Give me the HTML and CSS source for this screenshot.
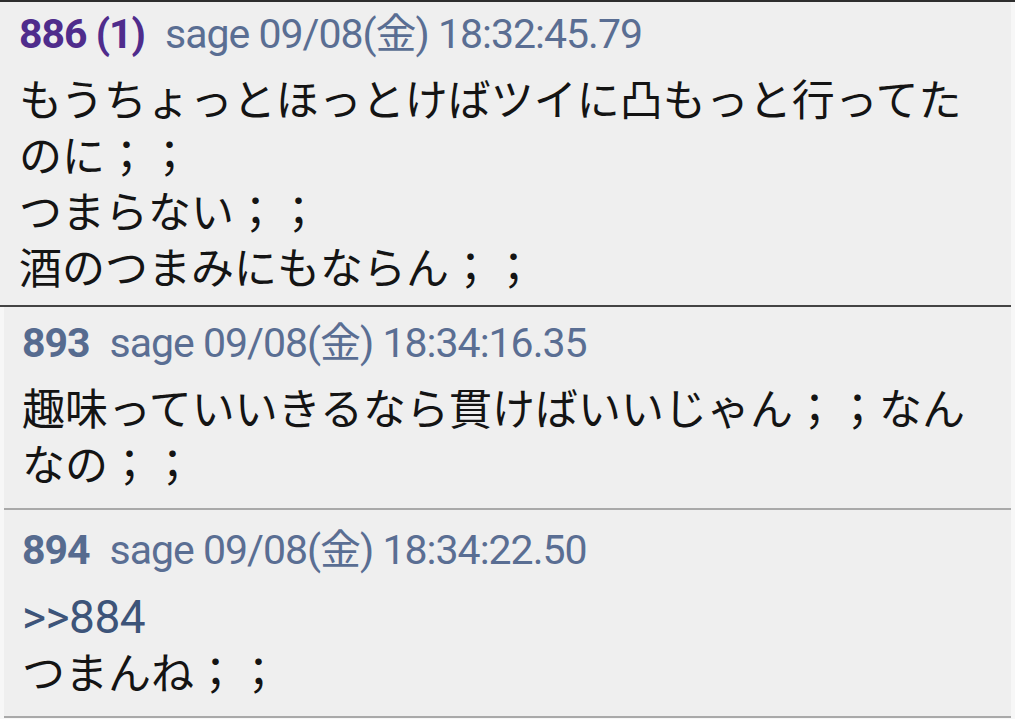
FILE: index.html
```html
<!DOCTYPE html>
<html lang="ja">
<head>
<meta charset="utf-8">
<title>thread</title>
<link rel="stylesheet" href="styles.css">
</head>
<body>
<div class="thread">
  <div class="post post-first">
    <div class="head"><span class="num num-mine">886 (1)</span><span class="meta">sage 09/08(金) 18:32:45.79</span></div>
    <div class="body">もうちょっとほっとけばツイに凸もっと行ってたのに；；<br>つまらない；；<br>酒のつまみにもならん；；</div>
  </div>
  <div class="post post-mid">
    <div class="head"><span class="num">893</span><span class="meta">sage 09/08(金) 18:34:16.35</span></div>
    <div class="body">趣味っていいきるなら貫けばいいじゃん；；なんなの；；</div>
  </div>
  <div class="post post-last">
    <div class="head"><span class="num">894</span><span class="meta">sage 09/08(金) 18:34:22.50</span></div>
    <div class="body"><span class="anchor">&gt;&gt;884</span><br>つまんね；；</div>
  </div>
</div>
</body>
</html>
```

FILE: styles.css
```css
html, body {
  margin: 0;
  padding: 0;
}
body {
  width: 1015px;
  height: 719px;
  overflow: hidden;
  background: #f7f7f7;
}
.thread {
  border-top: 2px solid #2e2e2e;
  display: flex;
  flex-direction: column;
}
.post {
  background: #efefef;
  margin: 0 4px;
  padding: 14px 18px 14px 18px;
  border-bottom: 2px solid #a9a9a9;
}
.post-first {
  margin-left: 0;
  padding: 10px 20px 8px 19px;
  border-bottom-color: #444;
}
.post-last {
  padding-top: 18px;
}
.head {
  font-family: "Roboto", "Noto Sans CJK JP", sans-serif;
  font-size: 41px;
  line-height: 44px;
  letter-spacing: -1px;
  white-space: nowrap;
  display: flex;
  align-items: baseline;
  gap: 20px;
}
.num {
  font-weight: 700;
  color: #566b8f;
}
.num-mine {
  color: #4f2c8c;
}
.meta {
  color: #5a6e93;
}
.body {
  margin-top: 17px;
  font-family: "Roboto", "Noto Sans CJK JP", sans-serif;
  font-size: 43px;
  line-height: 56px;
  color: #141414;
}
.anchor {
  font-size: 46px;
  letter-spacing: -0.5px;
  color: #3d5479;
}
```
